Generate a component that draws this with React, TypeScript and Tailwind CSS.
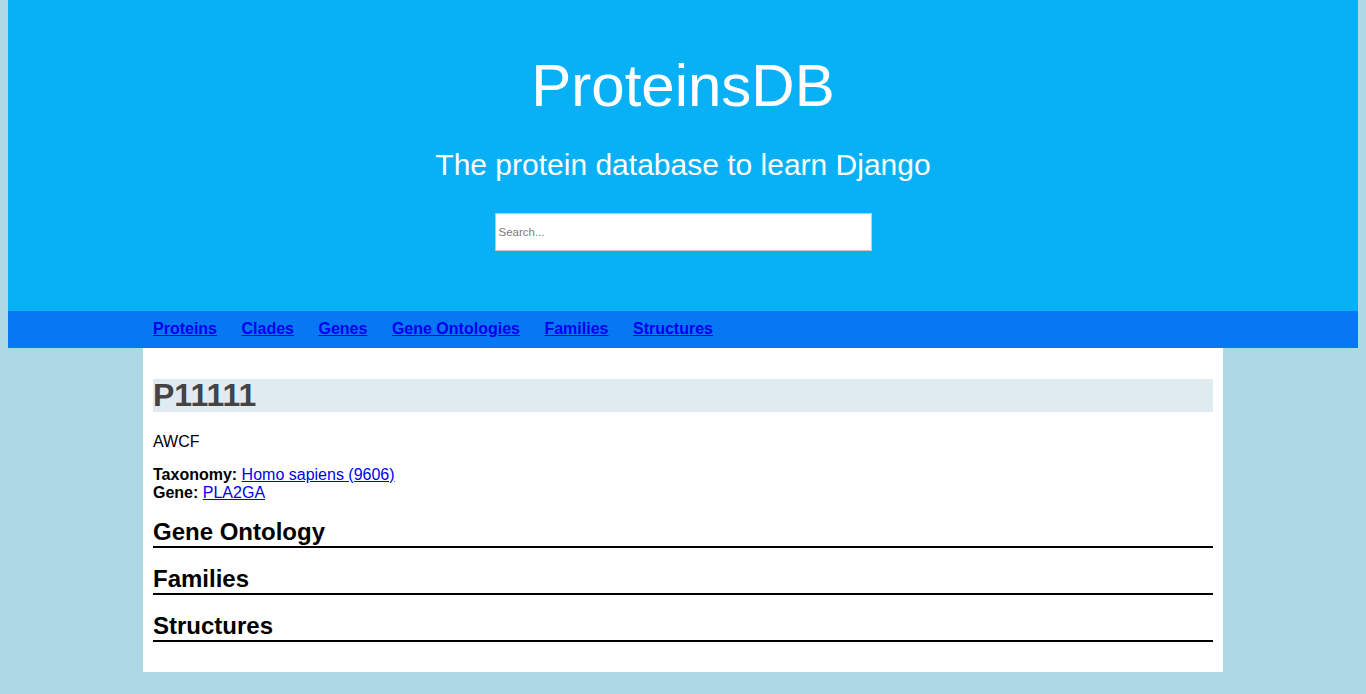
const navLinks = ["Proteins", "Clades", "Genes", "Gene Ontologies", "Families", "Structures"];

const sections = ["Gene Ontology", "Families", "Structures"];

function App() {
  return (
    <div className="min-h-screen bg-[#add8e6] px-2 font-['Liberation_Sans',Arial,Helvetica,sans-serif] text-black">
      <header className="flex h-[311px] flex-col items-center bg-[#08b0f5] text-white">
        <h1 className="mt-[51px] text-[60px] leading-[69px]">ProteinsDB</h1>
        <p className="mt-[28px] text-[30px] leading-[34px]">The protein database to learn Django</p>
        <input
          type="text"
          placeholder="Search..."
          className="mt-[31px] h-[38px] w-[377px] border border-[#c8c8c8] bg-white px-[3px] text-[11.5px] text-black outline-none placeholder:text-[#7a7a7a]"
        />
      </header>
      <nav className="h-[37px] bg-[#0777f4]">
        <div className="mx-auto flex h-full w-[1080px] gap-[24.5px] px-[10px] pt-[9px]">
          {navLinks.map((link) => (
            <a key={link} href="#" className="text-[16px] font-bold leading-[18px] text-[#0000ee] underline">
              {link}
            </a>
          ))}
        </div>
      </nav>
      <main className="mx-auto w-[1080px] bg-white px-[10px] pt-[31px] pb-[30px]">
        <h2 className="h-[33px] bg-[#e0ebf1] text-[32px] font-bold leading-[32px] text-[#444]">P11111</h2>
        <p className="mt-[21px] text-[16px] leading-[18px]">AWCF</p>
        <div className="mt-[15px] text-[16px] leading-[18px]">
          <div>
            <b>Taxonomy:</b>{" "}
            <a href="#" className="text-[#0000ee] underline">Homo sapiens (9606)</a>
          </div>
          <div>
            <b>Gene:</b>{" "}
            <a href="#" className="text-[#0000ee] underline">PLA2GA</a>
          </div>
        </div>
        {sections.map((s, i) => (
          <h3
            key={s}
            className={`${i === 0 ? "mt-[14px]" : "mt-[15px]"} border-b-2 border-black pt-[2px] text-[24px] font-bold leading-[28px]`}
          >
            {s}
          </h3>
        ))}
      </main>
    </div>
  );
}

export default App;
